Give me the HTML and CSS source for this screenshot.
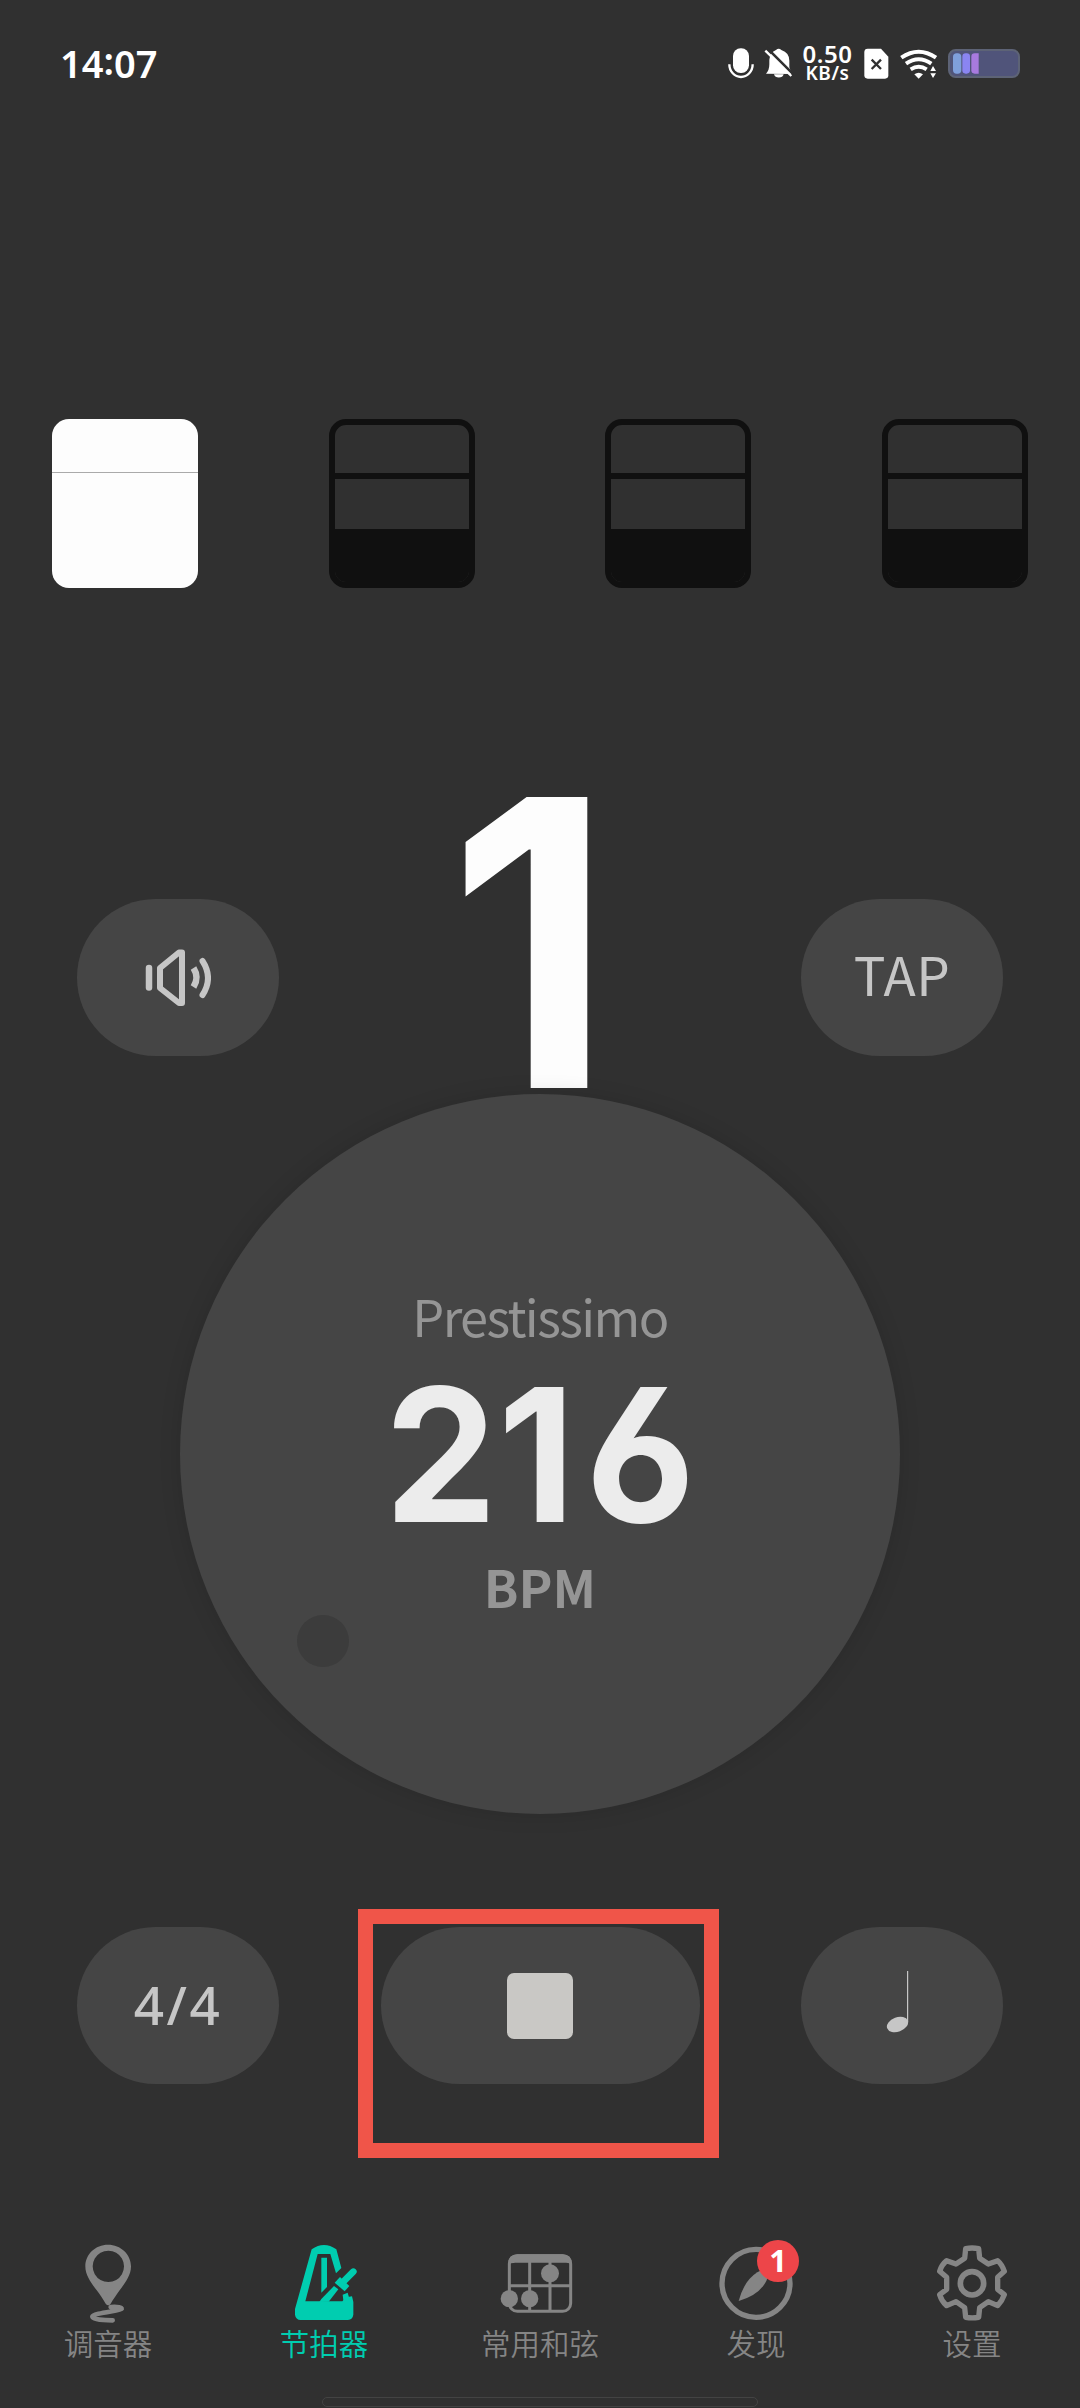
FILE: index.html
```html
<!DOCTYPE html>
<html lang="zh-CN">
<head>
<meta charset="UTF-8">
<title>节拍器</title>
<link rel="stylesheet" href="styles.css">
</head>
<body>
<div class="screen">
  <header class="status">
    <div class="clock">14<span class="colon">:</span>07</div>
    <svg class="status-left" width="72" height="40" viewBox="75 40 216 120">
      <rect x="99" y="56" width="48" height="74" rx="23" fill="#fff"/>
      <path d="M88 104a35 38 0 0 0 70 0" fill="none" stroke="#fff" stroke-width="7"/>
      <path d="M198 132q10-10 10-28v-14q2-22 20-29q8-7 16 0q24 8 24 32v20q2 10 10 20z" fill="#fff"/>
      <path d="M222 134a15 13 0 0 0 29 0z" fill="#fff"/>
      <path d="M200 54L280 134" stroke="#303030" stroke-width="8"/>
      <path d="M196 63L274 139" stroke="#fff" stroke-width="7"/>
    </svg>
    <div class="speed"><span class="rate">0.50</span><span class="unit">KB/s</span></div>
    <svg class="status-right" width="160" height="40" viewBox="485 40 480 120">
      <path d="M502 57h40l22 24v56q0 10-10 10h-52q-10 0-10-10V67q0-10 10-10z" fill="#fff"/>
      <path d="M514 90l28 28M542 90l-28 28" stroke="#303030" stroke-width="7"/>
      <g fill="none" stroke="#fff" stroke-width="12">
        <path d="M603 84Q655 48 707 84"/>
        <path d="M617 102Q655 76 693 102"/>
        <path d="M631 119Q655 104 679 119"/>
      </g>
      <path d="M642 134q13-9 26 0l-13 13z" fill="#fff"/>
      <path d="M685 128l14-22 14 22v3l-14 22-14-22z" fill="#303030"/>
      <path d="M690 124l8-15 9 15zM690 131h17l-9 14z" fill="#fff"/>
      <rect x="746" y="61" width="210" height="81" rx="20" fill="#50547a" stroke="#5d6376" stroke-width="6"/>
      <rect x="758" y="71" width="25" height="61" rx="11" fill="#7f9fdc"/>
      <rect x="786" y="71" width="23" height="61" rx="10" fill="#8a85f2"/>
      <path d="M823 71h12v61h-12q-10 0-10-10V81q0-10 10-10z" fill="#a87adf"/>
    </svg>
  </header>

  <section class="beats">
    <div class="beat on"><i></i><i></i><i></i></div>
    <div class="beat"><i></i><i></i><i></i></div>
    <div class="beat"><i></i><i></i><i></i></div>
    <div class="beat"><i></i><i></i><i></i></div>
  </section>

  <section class="count-row">
    <button class="pill">
      <svg width="66" height="60" viewBox="0 0 66 60" fill="none" stroke="#c6c6c6" stroke-width="6" stroke-linecap="round" stroke-linejoin="round">
        <path d="M4 20v19.500" stroke-width="6.500"/>
        <path d="M15 20L34 4.500h3V55h-3L15 40z"/>
        <path d="M48.500 20q6 9.500 0 19" stroke-linecap="butt" stroke-width="6.500"/>
        <path d="M57.500 13q11 17 0 34"/>
      </svg>
    </button>
    <div class="count">1</div>
    <button class="pill tap">TAP</button>
  </section>

  <section class="dial">
    <div class="tempo">Prestissimo</div>
    <div class="bpm"><span class="hundreds">2</span>16</div>
    <div class="bpm-unit">BPM</div>
    <span class="knob"></span>
  </section>

  <section class="controls">
    <button class="pill sig">4/4</button>
    <button class="pill wide"><span class="stop"></span></button>
    <button class="pill note">
      <svg width="24" height="66" viewBox="0 0 24 66" fill="#c6c6c6">
        <path d="M21 3h1.200v51H21z"/>
        <ellipse cx="11.500" cy="56.500" rx="11" ry="7.200" transform="rotate(-20 11.500 56.500)"/>
      </svg>
    </button>
    <span class="highlight"></span>
  </section>

  <nav class="tabs">
    <a class="tab">
      <svg viewBox="78 30 252 252">
        <path fill-rule="evenodd" d="M204 44c38 0 69 29 69 65c0 28-19 52-33 70c-11 15-21 30-28 42q-7 9-15 0c-8-14-17-28-28-42c-14-18-33-42-33-70c0-36 30-65 68-65zM205 62a47 47 0 1 0 .1 0z" fill="currentColor"/>
        <path d="M212 231c22-2 34 2 33 6c-2 5-88 13-88 23c1 8 34 11 61 11" fill="none" stroke="currentColor" stroke-width="14" stroke-linecap="round"/>
      </svg>
      <span>调音器</span>
    </a>
    <a class="tab active">
      <svg viewBox="726 30 252 252">
        <path fill-rule="evenodd" d="M815 58q37-26 74 0l15 56-16 16-17-58h-38l-37 142h111l12-12 17-3 4 17v38q-2 14-16 16H782q-15-1-17-16v-17z" fill="currentColor"/>
        <path d="M844 83h17v88l-17 17z" fill="currentColor"/>
        <path d="M844 207L882 168L895 178L866 215L838 216z" fill="currentColor"/>
        <path d="M884 158l16-17l28 27l-14 16z" fill="currentColor"/>
        <path d="M908 157L940 125" stroke="currentColor" stroke-width="20" stroke-linecap="round"/>
        <path d="M908 194l15-6 16 56-26-10z" fill="currentColor"/>
      </svg>
      <span>节拍器</span>
    </a>
    <a class="tab">
      <svg viewBox="144 30 252 252">
        <g fill="none" stroke="currentColor" stroke-width="9">
          <rect x="178" y="77" width="184" height="167" rx="24"/>
          <path d="M178 167H362M239 90V244M300 90V244"/>
        </g>
        <path d="M174 104q0-31 28-31h136q28 0 28 31q-6-6-18-6H196q-14 0-22 6z" fill="currentColor"/>
        <g fill="currentColor"><circle cx="300" cy="130" r="27"/><circle cx="178" cy="206" r="26"/><circle cx="239" cy="206" r="26"/></g>
      </svg>
      <span>常用和弦</span>
    </a>
    <a class="tab">
      <svg viewBox="792 30 252 252">
        <circle cx="918" cy="160" r="102" fill="none" stroke="currentColor" stroke-width="16"/>
        <path d="M866 213q16-61 56-86l45-22-18 48q-21 42-83 60z" fill="currentColor"/>
      </svg>
      <b class="badge">1</b>
      <span>发现</span>
    </a>
    <a class="tab">
      <svg viewBox="90 30 252 252" fill="none" stroke="currentColor">
        <path d="M197 56Q216 52 236 56L239 85L265 102L293 92Q306 103 313 124L293 142V178L313 194Q306 214 293 227L265 215L239 233L236 262Q216 265 197 262L194 233L168 215L140 227Q125 214 119 194L140 178V142L119 124Q125 104 140 92L168 102L194 85Z" stroke-width="16" stroke-linejoin="round"/>
        <circle cx="216" cy="160" r="35" stroke-width="17"/>
      </svg>
      <span>设置</span>
    </a>
  </nav>
  <div class="home-bar"></div>
</div>
</body>
</html>
```
FILE: styles.css
```css
* { box-sizing: border-box; }
body { margin: 0; background: #303030; }
.screen {
  width: 1080px;
  height: 2408px;
  display: flex;
  flex-direction: column;
  background: #303030;
  overflow: hidden;
  font-family: "Noto Sans CJK SC", sans-serif;
}
.status {
  height: 126px;
  padding: 0 58px 0 60px;
  display: flex;
  align-items: center;
  color: #fff;
  font-family: "Noto Sans", sans-serif;
}
.clock { flex: 1; font-size: 38px; font-weight: 600; line-height: 52px; }
.colon { position: relative; top: -3px; }
.speed {
  width: 65px;
  display: flex;
  flex-direction: column;
  align-items: center;
  font-weight: 600;
  padding-right: 4px;
}
.rate { font-size: 24px; line-height: 20px; letter-spacing: .5px; }
.unit { font-size: 19px; line-height: 19px; letter-spacing: .6px; }

.beats {
  margin-top: 293px;
  padding: 0 52px;
  display: flex;
  justify-content: space-between;
}
.beat {
  width: 146px;
  height: 169px;
  border-radius: 17px;
  border: 6px solid #101010;
  overflow: hidden;
  display: grid;
  grid-template-rows: 48px 56px 1fr;
}
.beat i:nth-child(2) { border-top: 6px solid #101010; }
.beat i:nth-child(3) { background: #101010; }
.beat.on { border: 0; background: #fdfdfd; grid-template-rows: 53px 1fr 0; }
.beat.on i:nth-child(2) { border-top: 1px solid #aaa; }
.beat.on i:nth-child(3) { background: none; }

.count-row {
  margin-top: 209px;
  height: 291px;
  padding: 102px 77px 0;
  display: flex;
  justify-content: space-between;
  align-items: flex-start;
}
.pill {
  width: 202px;
  height: 157px;
  border: 0;
  border-radius: 79px;
  padding: 0;
  background: #454545;
  color: #c6c6c6;
  display: flex;
  align-items: center;
  justify-content: center;
  font: 400 53px/80px "Noto Sans CJK SC", sans-serif;
}
.tap { padding-bottom: 9px; letter-spacing: .5px; }
.count {
  margin-top: -102px;
  font: 700 400px/291px Inter, sans-serif;
  color: #fdfdfd;
  transform: translateX(-10px) scaleX(.95);
}
.dial {
  position: relative;
  margin: 6px auto 0;
  width: 720px;
  height: 720px;
  border-radius: 50%;
  background: #454545;
  box-shadow: 0 0 22px rgba(0, 0, 0, .12);
  display: flex;
  flex-direction: column;
  align-items: center;
}
.tempo { margin-top: 182px; font-size: 50.5px; line-height: 78px; letter-spacing: -1.6px; color: #959595; }
.bpm {
  margin-top: 33px;
  padding-left: 10px;
  font: 700 186px/136px Inter, sans-serif;
  font-feature-settings: "cv03";
  letter-spacing: 11px;
  transform: scaleX(.96);
  color: #ececec;
}
.hundreds { letter-spacing: 1px; }
.bpm-unit { margin-top: 24px; font: 700 51px/78px "Noto Sans CJK SC", sans-serif; color: #959595; }
.knob {
  position: absolute;
  left: 117px;
  top: 521px;
  width: 52px;
  height: 52px;
  border-radius: 50%;
  background: #3c3c3c;
}
.controls {
  position: relative;
  margin-top: 113px;
  padding: 0 77px;
  display: flex;
  justify-content: space-between;
}
.sig { font-family: "Noto Sans", sans-serif; font-weight: 500; letter-spacing: 2.5px; padding-bottom: 2px; }
.wide { width: 319px; }
.note { padding: 0 9px 10px 0; }
.stop { width: 66px; height: 66px; border-radius: 7px; background: #c9c8c5; }
.highlight {
  position: absolute;
  left: 358px;
  top: -18px;
  width: 361px;
  height: 249px;
  border: 15px solid #f05549;
}
.tabs {
  margin-top: 156px;
  display: grid;
  grid-template-columns: repeat(5, 1fr);
}
.tab {
  position: relative;
  display: flex;
  flex-direction: column;
  align-items: center;
  color: #858585;
  font-size: 29.5px;
  font-weight: 350;
  line-height: 36px;
}
.tab svg { width: 84px; height: 84px; }
.tab.active { color: #00cdb0; }
.badge {
  position: absolute;
  left: 109px;
  top: 0;
  width: 42px;
  height: 42px;
  border-radius: 50%;
  background: #ed4549;
  color: #fff;
  font: 700 31px/40px "Noto Sans", sans-serif;
  text-align: center;
}
.home-bar {
  margin: 37px auto 0;
  width: 436px;
  height: 10px;
  border: 1px solid #434343;
  border-radius: 5px;
}
```
